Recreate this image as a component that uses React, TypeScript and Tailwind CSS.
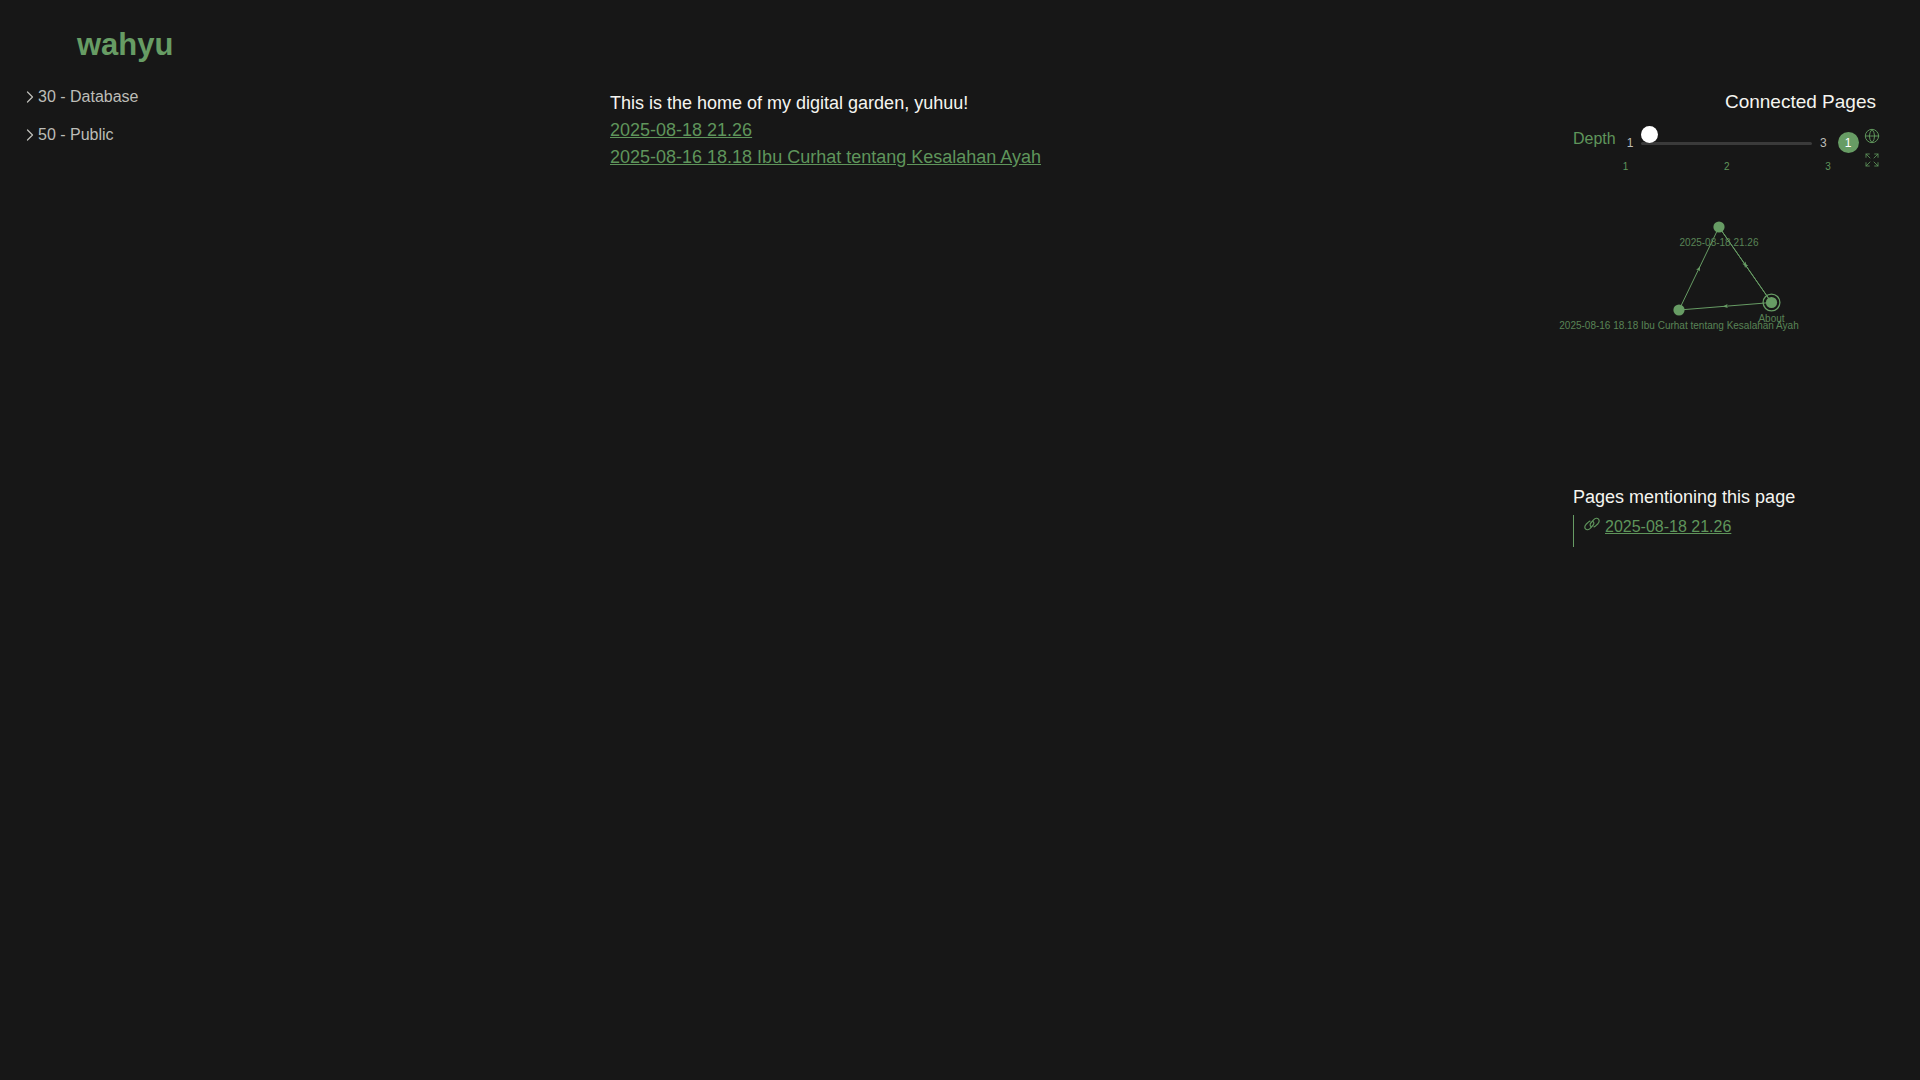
import { useState } from "react";
import { ChevronRight, Expand, Globe } from "lucide-react";

const folders = ["30 - Database", "50 - Public"];

const pages = ["2025-08-18 21.26", "2025-08-16 18.18 Ibu Curhat tentang Kesalahan Ayah"];

const nodes = [
  { label: "2025-08-18 21.26", x: 158, y: 47 },
  { label: "2025-08-16 18.18 Ibu Curhat tentang Kesalahan Ayah", x: 118, y: 130 },
  { label: "About", x: 210.5, y: 122.5, current: true },
];

const edges = [
  { from: 1, to: 0 },
  { from: 0, to: 2 },
  { from: 2, to: 0 },
  { from: 2, to: 1 },
];

function LinkIcon() {
  return (
    <svg
      viewBox="0 0 18 14"
      className="mt-[2px] h-[14px] w-[18px] shrink-0"
      fill="none"
      stroke="currentColor"
      strokeWidth="1.2"
      strokeLinecap="round"
    >
      <path d="M8.300 9.800C7 9 6.700 7.200 7.800 6l3-3.300c1.400-1.400 3.600-1.700 4.700-.6s.8 3.200-.6 4.600l-2.300 2.200c-.5.500-1 .8-1.600 1" />
      <path d="M9.700 4.200c1.300.8 1.600 2.600.5 3.800l-3 3.300c-1.400 1.400-3.600 1.700-4.700.6s-.8-3.200.6-4.600L5.400 5.100c.5-.5 1-.8 1.600-1" />
    </svg>
  );
}

function Graph() {
  return (
    <svg width="300" height="300" className="-ml-3 overflow-visible" role="img" aria-label="Connected pages graph">
      <g stroke="#679c64" fill="#679c64">
        {edges.map(({ from, to }) => {
          const a = nodes[from];
          const b = nodes[to];
          const angle = (Math.atan2(b.y - a.y, b.x - a.x) * 180) / Math.PI;
          return (
            <g key={`${from}-${to}`}>
              <line x1={a.x} y1={a.y} x2={b.x} y2={b.y} />
              <path
                d="M2.5 0L-2.5 2L-1.5 0L-2.5 -2Z"
                stroke="none"
                transform={`translate(${(a.x + b.x) / 2} ${(a.y + b.y) / 2}) rotate(${angle})`}
              />
            </g>
          );
        })}
      </g>
      {nodes.map((node) => (
        <g key={node.label} fill="#679c64">
          <circle cx={node.x} cy={node.y} r="5.6" />
          {node.current && (
            <circle cx={node.x} cy={node.y} r="8.4" fill="none" stroke="#679c64" strokeWidth="1.3" />
          )}
          <text x={node.x} y={node.y + 19} textAnchor="middle" className="fill-[#598456] text-[10px]">
            {node.label}
          </text>
        </g>
      ))}
    </svg>
  );
}

function DepthControl() {
  const [depth, setDepth] = useState(1);

  return (
    <div className="flex pt-[11px] text-[#5f955b]">
      <label htmlFor="depth">Depth</label>
      <div className="ml-[7px] w-[208px]">
        <div className="flex h-8 items-center justify-between gap-2 px-1 text-xs text-[#bdbdb8]">
          <span>1</span>
          <input
            id="depth"
            type="range"
            min="1"
            max="3"
            value={depth}
            onChange={(e) => setDepth(Number(e.target.value))}
            className="h-[3px] min-w-0 flex-1 appearance-none rounded-full bg-[#3a3a3a] [&::-webkit-slider-runnable-track]:h-[3px] [&::-webkit-slider-thumb]:-mt-4 [&::-webkit-slider-thumb]:size-[17px] [&::-webkit-slider-thumb]:appearance-none [&::-webkit-slider-thumb]:rounded-full [&::-webkit-slider-thumb]:bg-white"
          />
          <span>3</span>
        </div>
        <div className="flex justify-between text-[10px] leading-4">
          <span>1</span>
          <span>2</span>
          <span>3</span>
        </div>
      </div>
      <span className="mt-[5px] ml-[7px] flex size-[21px] items-center justify-center rounded-full bg-[#679c64] text-xs text-white">
        {depth}
      </span>
      <div className="ml-[5px] flex flex-col gap-2 pt-px">
        <button aria-label="Global graph">
          <Globe size={16} strokeWidth={1.5} />
        </button>
        <button aria-label="Full screen">
          <Expand size={16} strokeWidth={1.25} />
        </button>
      </div>
    </div>
  );
}

export default function App() {
  return (
    <div className="grid min-h-screen grid-cols-[347px_1fr_347px] bg-[#171717] font-['Liberation_Sans',sans-serif] text-[#f5f5f0]">
      <aside className="pt-[25px]">
        <h1 className="pl-[77px] text-[31px] leading-10 font-bold text-[#679c64]">
          <a href="#">wahyu</a>
        </h1>
        <nav className="flex flex-col gap-[14px] pt-5 pl-5 text-[#bdbdb8]">
          {folders.map((folder) => (
            <button key={folder} className="flex items-center text-left">
              <ChevronRight size={20} strokeWidth={1.5} className="-mr-0.5" />
              {folder}
            </button>
          ))}
        </nav>
      </aside>

      <main className="mx-auto w-full max-w-[700px] pt-[90px] text-lg leading-[27px]">
        <p>This is the home of my digital garden, yuhuu!</p>
        {pages.map((page) => (
          <p key={page}>
            <a href="#" className="text-[#5f955b] underline">
              {page}
            </a>
          </p>
        ))}
      </main>

      <aside className="pt-[88px]">
        <h2 className="pr-11 text-right text-[19px] leading-7">Connected Pages</h2>
        <DepthControl />
        <div className="mt-[5px] h-[303px]">
          <Graph />
        </div>
        <h2 className="text-lg leading-7">Pages mentioning this page</h2>
        <div className="mt-1 flex h-8 border-l border-[#679c64] pl-[9px] text-[#5f955b]">
          <LinkIcon />
          <a href="#" className="ml-1 underline">
            2025-08-18 21.26
          </a>
        </div>
      </aside>
    </div>
  );
}
